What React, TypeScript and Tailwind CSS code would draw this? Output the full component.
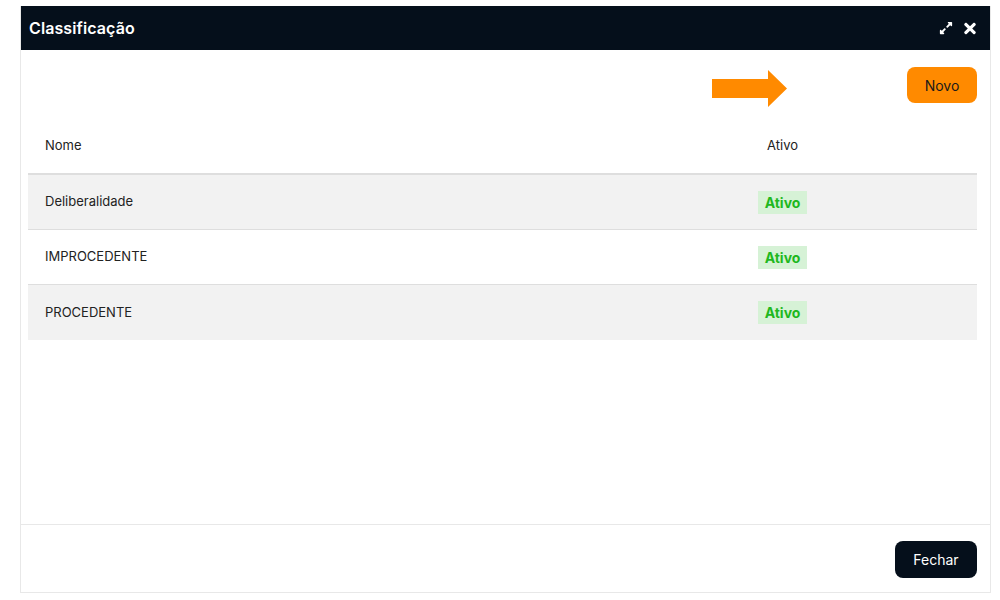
import React from "react";
import { FaExpandAlt, FaTimes } from "react-icons/fa";

const rows = [
  { nome: "Deliberalidade", gray: true },
  { nome: "IMPROCEDENTE", gray: false },
  { nome: "PROCEDENTE", gray: true },
];

export default function App() {
  return (
    <div
      className="w-[1000px] h-[600px] bg-white pt-[6px] pl-[20px]"
      style={{ fontFamily: "Inter, 'Open Sans', sans-serif" }}
    >
      <div className="w-[971px] h-[587px] border border-[#e8e8e8] border-t-0 flex flex-col">
        <div className="h-[44px] bg-[#050f1b] flex items-center justify-between pl-[8px] pr-[13px]">
          <span className="text-white font-semibold text-[16px] tracking-[0.1px]">Classificação</span>
          <div className="flex items-center gap-[10px] text-white">
            <FaExpandAlt className="w-[14px] h-[14px]" />
            <FaTimes className="w-[14px] h-[17px]" />
          </div>
        </div>
        <div className="flex-1 pl-[7px] pr-[13px] relative">
          <div className="h-[69px] pt-[17px] flex justify-end">
            <button className="w-[70px] h-[36px] rounded-[8px] bg-[#ff8a00] text-[#1a1a1a] text-[14px]">
              Novo
            </button>
          </div>
          <svg
            className="absolute left-[691px] top-[20px]"
            width="76"
            height="38"
            viewBox="0 0 76 38"
          >
            <polygon points="0,9 56,9 56,0 75,18.5 56,37 56,28 0,28" fill="#ff8a00" />
          </svg>
          <div className="grid grid-cols-[560px_1fr] h-[56px] items-center border-b-2 border-[#dedede] text-[13px] text-[#222]">
            <div className="pl-[17px]">Nome</div>
            <div className="text-center">Ativo</div>
          </div>
          {rows.map((r, i) => (
            <div
              key={r.nome}
              className={
                "grid grid-cols-[560px_1fr] h-[55px] items-center text-[13px] text-[#222] " +
                (r.gray ? "bg-[#f2f2f2] " : "bg-white ") +
                (i < rows.length - 1 ? "border-b border-[#dedede]" : "")
              }
            >
              <div className="pl-[17px]">{r.nome}</div>
              <div className="flex justify-center">
                <span className="bg-[#d6f2d6] text-[#1fb81f] font-bold text-[14px] px-[7px] h-[23px] flex items-center">
                  Ativo
                </span>
              </div>
            </div>
          ))}
        </div>
        <div className="h-[68px] border-t border-[#e8e8e8] flex justify-end items-start pt-[16px] pr-[13px]">
          <button className="w-[82px] h-[37px] rounded-[8px] bg-[#050f1b] text-white text-[14px]">
            Fechar
          </button>
        </div>
      </div>
    </div>
  );
}
